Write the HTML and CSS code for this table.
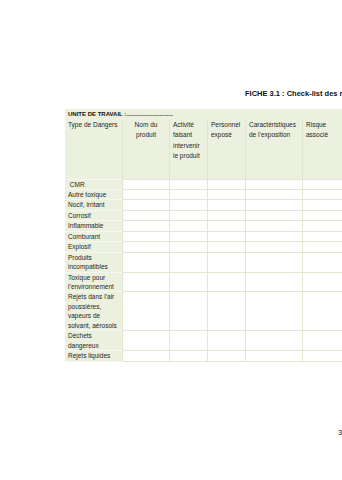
FILE: index.html
```html
<!DOCTYPE html>
<html lang="fr">
<head>
<meta charset="utf-8">
<title>Fiche 3.1</title>
<link rel="stylesheet" href="styles.css">
</head>
<body>
<div class="page">
  <h1 class="title">FICHE 3.1 : Check-list des risques chimiques</h1>
  <table class="grid">
    <colgroup>
      <col class="c1"><col class="c2"><col class="c3"><col class="c4"><col class="c5"><col class="c6">
    </colgroup>
    <thead>
      <tr class="unit"><th colspan="6">UNITE DE TRAVAIL :............................</th></tr>
      <tr class="heads">
        <th class="first">Type de Dangers</th>
        <th class="center">Nom du<br>produit</th>
        <th>Activité<br>faisant<br>intervenir<br>le produit</th>
        <th>Personnel<br>exposé</th>
        <th>Caractéristiques<br>de l’exposition</th>
        <th>Risque<br>associé</th>
      </tr>
    </thead>
    <tbody>
      <tr><td class="first">&nbsp;CMR</td><td></td><td></td><td></td><td></td><td></td></tr>
      <tr><td class="first">Autre toxique</td><td></td><td></td><td></td><td></td><td></td></tr>
      <tr><td class="first">Nocif, irritant</td><td></td><td></td><td></td><td></td><td></td></tr>
      <tr><td class="first">Corrosif</td><td></td><td></td><td></td><td></td><td></td></tr>
      <tr><td class="first">Inflammable</td><td></td><td></td><td></td><td></td><td></td></tr>
      <tr><td class="first">Comburant</td><td></td><td></td><td></td><td></td><td></td></tr>
      <tr><td class="first">Explosif</td><td></td><td></td><td></td><td></td><td></td></tr>
      <tr><td class="first">Produits<br>incompatibles</td><td></td><td></td><td></td><td></td><td></td></tr>
      <tr><td class="first">Toxique pour<br>l’environnement</td><td></td><td></td><td></td><td></td><td></td></tr>
      <tr><td class="first">Rejets dans l’air<br>poussières,<br>vapeurs de<br>solvant, aérosols</td><td></td><td></td><td></td><td></td><td></td></tr>
      <tr><td class="first">Déchets<br>dangereux</td><td></td><td></td><td></td><td></td><td></td></tr>
      <tr><td class="first">Rejets liquides</td><td></td><td></td><td></td><td></td><td></td></tr>
    </tbody>
  </table>
  <div class="pageno">3</div>
</div>
</body>
</html>
```
FILE: styles.css
```css
html, body {
  margin: 0;
  padding: 0;
  background: #ffffff;
  overflow: hidden;
  width: 342px;
  height: 480px;
}

.page {
  width: 640px;
  padding-top: 89px;
  font-family: "Liberation Sans", Arial, sans-serif;
  color: #262626;
}

.title {
  margin: 0 0 10px 0;
  padding-left: 245px;
  font-size: 7.5px;
  line-height: 10px;
  font-weight: bold;
  white-space: nowrap;
  color: #111111;
}

.grid {
  margin-left: 65px;
  border-collapse: separate;
  border-spacing: 0;
  table-layout: fixed;
  width: 287px;
  font-size: 6.5px;
}

.c1 { width: 57px; }
.c2 { width: 47px; }
.c3 { width: 38px; }
.c4 { width: 38px; }
.c5 { width: 57px; }
.c6 { width: 50px; }

.grid th {
  font-weight: normal;
  text-align: left;
  vertical-align: top;
  background: #ebf1de;
  line-height: 10.5px;
  padding: 0 0 0 3px;
  white-space: nowrap;
  overflow: hidden;
}

.unit th {
  font-weight: bold;
  font-size: 6px;
  height: 10.5px;
  color: #111111;
}

.heads th {
  height: 59px;
  border-left: 1px solid #dfe6cf;
}

.heads th.first {
  border-left: none;
}

.heads th.center {
  text-align: center;
  padding-left: 0;
}

.grid td {
  padding: 0;
  line-height: 9.45px;
  border-bottom: 1px solid #e1e7d3;
  border-left: 1px solid #e1e7d3;
  background: #ffffff;
  white-space: nowrap;
  overflow: hidden;
}

.grid td.first {
  border-left: none;
  border-bottom: 1px solid #f6f8f0;
  background: #ebf1de;
  padding-left: 3px;
}

.grid tbody tr:first-child td {
  border-top: 1px solid #e1e7d3;
}

.grid tbody tr:first-child td.first {
  border-top: 1px solid #f6f8f0;
}

.pageno {
  margin-top: 66px;
  padding-left: 338px;
  font-size: 7.5px;
  line-height: 10px;
  color: #111111;
}
```
